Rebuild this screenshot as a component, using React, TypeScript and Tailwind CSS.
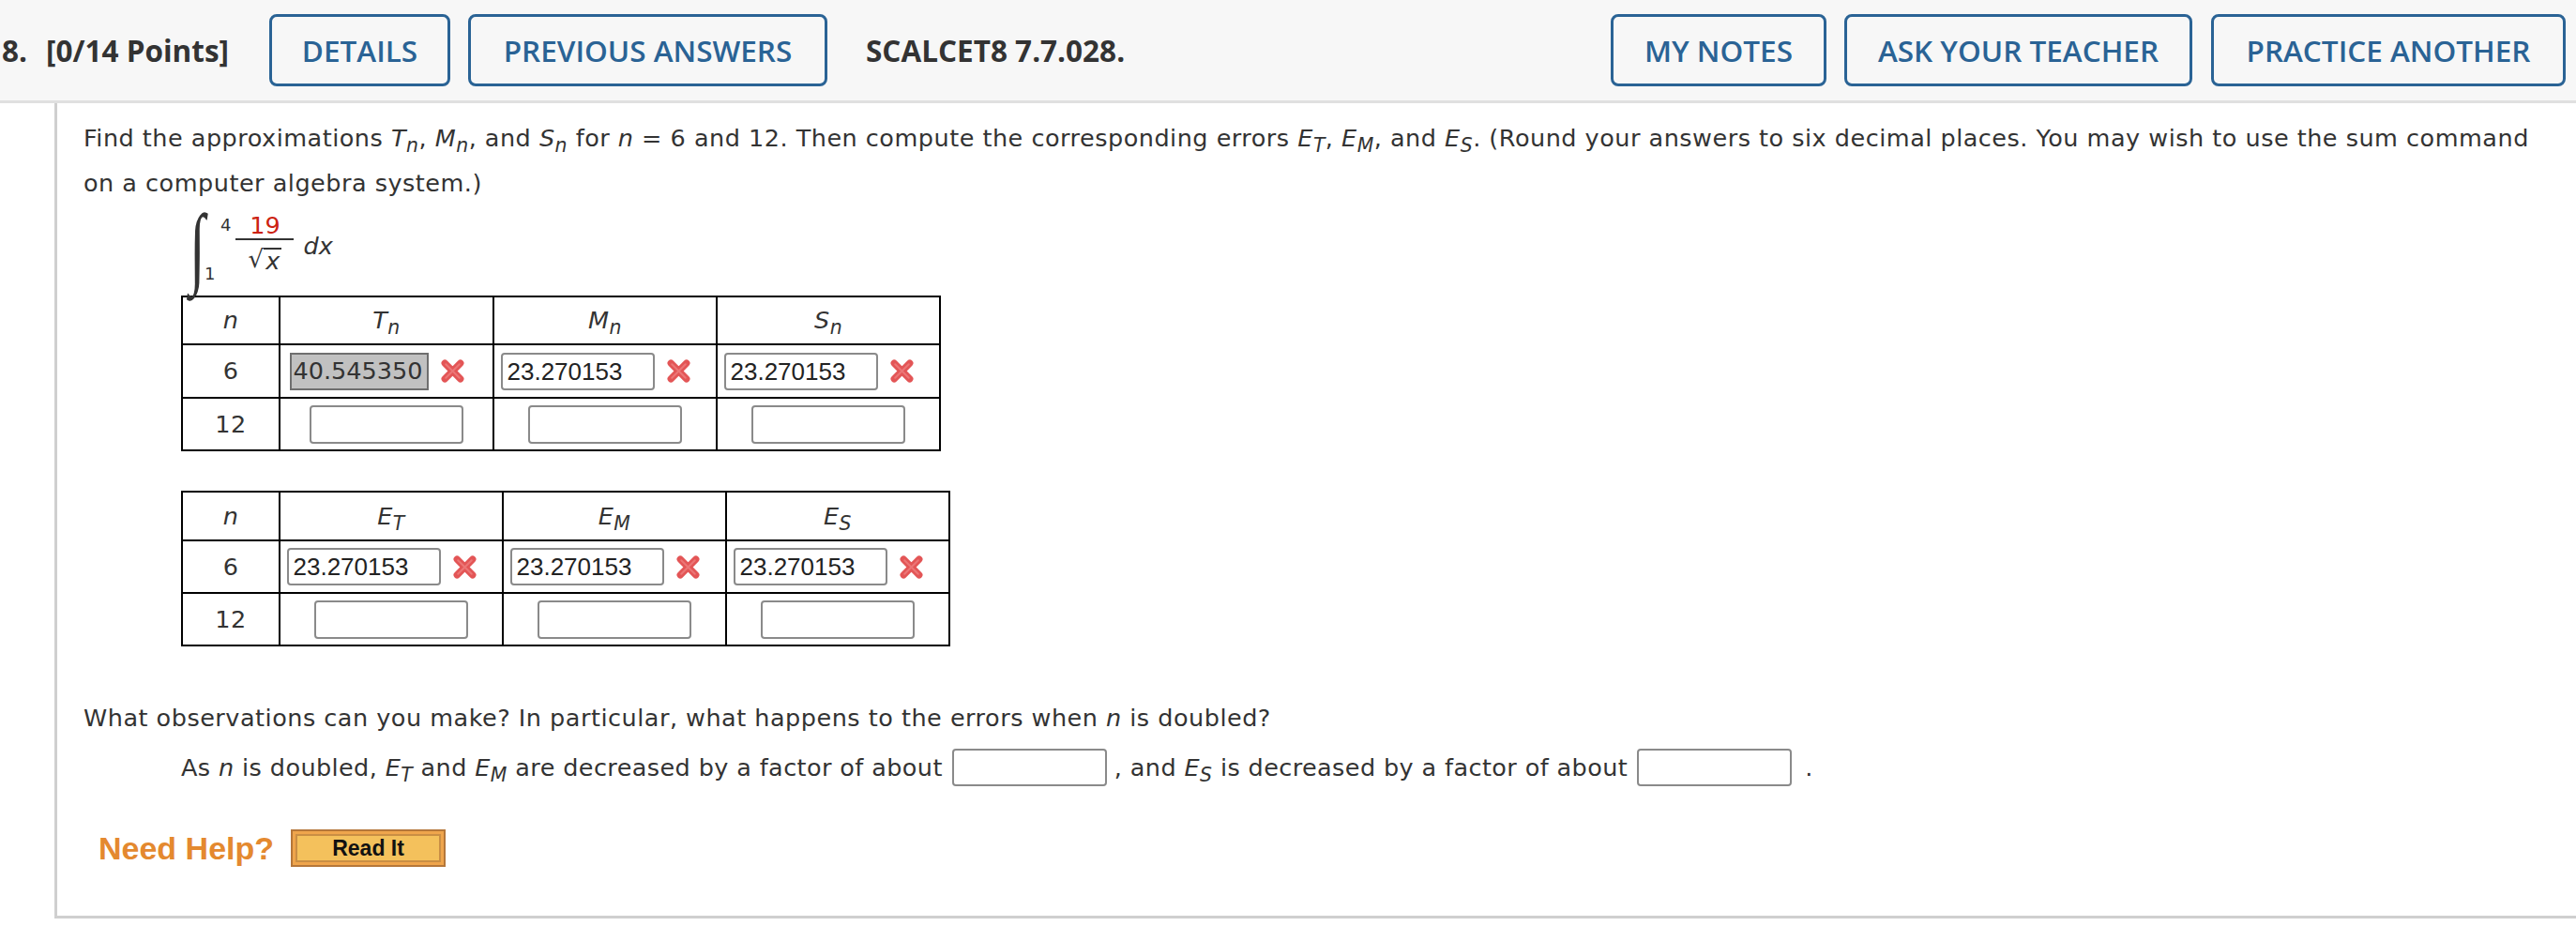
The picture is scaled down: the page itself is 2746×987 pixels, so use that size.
import React from "react";

const XMark = () => (
  <svg width="27" height="27" viewBox="0 0 26 26" className="shrink-0 block">
    <path d="M5 5 L21 21 M21 5 L5 21" stroke="#e35556" strokeWidth="7" strokeLinecap="round" />
    <path d="M6 6 L20 20 M20 6 L6 20" stroke="#f08584" strokeWidth="2" strokeLinecap="round" opacity="0.7" />
  </svg>
);

const S = ({ b, s }: { b: string; s: string }) => (
  <span className="italic">
    {b}
    <sub className="text-[0.8em] bottom-[-0.3em] italic">{s}</sub>
  </span>
);

const FilledInput = ({ v }: { v: string }) => (
  <div className="w-[164px] h-[40px] border-2 border-[#8a8a8a] rounded-[4px] bg-white flex items-center pl-[5px] font-['Liberation_Sans',sans-serif] text-[26px] text-[#222] leading-none tracking-normal">
    {v}
  </div>
);

const EmptyInput = () => (
  <div className="w-[164px] h-[41px] border-2 border-[#8a8a8a] rounded-[4px] bg-white mx-auto" />
);

const Cell6 = ({ children }: { children: React.ReactNode }) => (
  <div className="flex items-center justify-center">
    {children}
    <span className="ml-[12px] mr-[20px]">
      <XMark />
    </span>
  </div>
);

const td = "border-2 border-black text-center align-middle p-0";

const HeaderButton = ({ w, label }: { w: string; label: string }) => (
  <div
    className={`${w} h-[77px] border-[3.5px] border-[#2a6395] rounded-[8px] flex items-center justify-center text-[#2a6395] font-semibold text-[31.5px] leading-none whitespace-nowrap`}
  >
    {label}
  </div>
);

export default function App() {
  return (
    <div className="w-[2746px] h-[987px] bg-white overflow-hidden">
      {/* Header */}
      <div className="h-[110px] bg-[#f7f7f7] border-b-[3px] border-[#e0e0e0] flex items-center font-['Open_Sans',sans-serif] pr-[11px]">
        <span className="font-bold text-[31.5px] text-[#333] ml-[2px] leading-none">8.</span>
        <span className="font-bold text-[31.5px] text-[#333] ml-[20px] leading-none whitespace-nowrap">[0/14 Points]</span>
        <div className="ml-[43px]">
          <HeaderButton w="w-[193px]" label="DETAILS" />
        </div>
        <div className="ml-[19px]">
          <HeaderButton w="w-[383px]" label="PREVIOUS ANSWERS" />
        </div>
        <span className="ml-[41px] font-bold text-[31.5px] text-[#333] leading-none whitespace-nowrap">SCALCET8 7.7.028.</span>
        <div className="ml-auto">
          <HeaderButton w="w-[230px]" label="MY NOTES" />
        </div>
        <div className="ml-[19px]">
          <HeaderButton w="w-[371px]" label="ASK YOUR TEACHER" />
        </div>
        <div className="ml-[20px]">
          <HeaderButton w="w-[378px]" label="PRACTICE ANOTHER" />
        </div>
      </div>

      {/* Panel */}
      <div className="ml-[58px] border-l-[3px] border-b-[3px] border-[#cfcfcf] pl-[28px] pt-[13px] pb-[50px] font-['DejaVu_Sans',sans-serif] text-[25.5px] tracking-[0.5px] leading-[48px] text-[#333]">
        <div className="whitespace-nowrap">
          Find the approximations <S b="T" s="n" />, <S b="M" s="n" />, and <S b="S" s="n" /> for <i>n</i> = 6 and 12. Then
          compute the corresponding errors <S b="E" s="T" />, <S b="E" s="M" />, and <S b="E" s="S" />. (Round your answers to
          six decimal places. You may wish to use the sum command
        </div>
        <div className="whitespace-nowrap">on a computer algebra system.)</div>

        {/* Integral */}
        <div className="mt-[4px] h-[80px] flex items-stretch ml-[108px] leading-none tracking-normal">
          <div className="w-[27px] flex items-center justify-center">
            <span className="font-['Liberation_Serif',serif] italic text-[60px] scale-y-[1.6] inline-block text-[#333] leading-none">∫</span>
          </div>
          <div className="ml-[11px] flex flex-col justify-between text-[18px] pt-[8px] pb-[2px]">
            <span>4</span>
            <span className="-ml-[17px]">1</span>
          </div>
          <div className="ml-[5px] flex flex-col items-center w-[62px]">
            <span className="mt-[5px] text-[#cc2211] leading-[24px]">19</span>
            <div className="mt-[2px] h-[2px] w-[62px] bg-[#333]" />
            <span className="mt-[6px] leading-[28px] flex items-end">
              <span className="text-[26px]">√</span>
              <span className="italic border-t-2 border-[#333] leading-[24px] px-[2px]">x</span>
            </span>
          </div>
          <div className="ml-[10px] self-center italic">dx</div>
        </div>

        {/* Table 1 */}
        <table className="border-collapse ml-[104px] mt-[12px] leading-normal">
          <tbody>
            <tr className="h-[51px]">
              <td className={`${td} w-[104px] italic`}>n</td>
              <td className={`${td} w-[228px]`}><S b="T" s="n" /></td>
              <td className={`${td} w-[238px]`}><S b="M" s="n" /></td>
              <td className={`${td} w-[238px]`}><S b="S" s="n" /></td>
            </tr>
            <tr className="h-[57px]">
              <td className={td}>6</td>
              <td className={td}>
                <Cell6>
                  <div className="w-[148px] h-[40px] bg-[#c1c1c1] border-2 border-[#6f6f6f] flex items-center pl-[2px] text-[25.5px] tracking-normal text-[#333] leading-none">
                    40.545350
                  </div>
                </Cell6>
              </td>
              <td className={td}>
                <Cell6>
                  <FilledInput v="23.270153" />
                </Cell6>
              </td>
              <td className={td}>
                <Cell6>
                  <FilledInput v="23.270153" />
                </Cell6>
              </td>
            </tr>
            <tr className="h-[56px]">
              <td className={td}>12</td>
              <td className={td}><EmptyInput /></td>
              <td className={td}><EmptyInput /></td>
              <td className={td}><EmptyInput /></td>
            </tr>
          </tbody>
        </table>

        {/* Table 2 */}
        <table className="border-collapse ml-[104px] mt-[42px] leading-normal">
          <tbody>
            <tr className="h-[52px]">
              <td className={`${td} w-[104px] italic`}>n</td>
              <td className={`${td} w-[238px]`}><S b="E" s="T" /></td>
              <td className={`${td} w-[238px]`}><S b="E" s="M" /></td>
              <td className={`${td} w-[238px]`}><S b="E" s="S" /></td>
            </tr>
            <tr className="h-[56px]">
              <td className={td}>6</td>
              <td className={td}>
                <Cell6>
                  <FilledInput v="23.270153" />
                </Cell6>
              </td>
              <td className={td}>
                <Cell6>
                  <FilledInput v="23.270153" />
                </Cell6>
              </td>
              <td className={td}>
                <Cell6>
                  <FilledInput v="23.270153" />
                </Cell6>
              </td>
            </tr>
            <tr className="h-[56px]">
              <td className={td}>12</td>
              <td className={td}><EmptyInput /></td>
              <td className={td}><EmptyInput /></td>
              <td className={td}><EmptyInput /></td>
            </tr>
          </tbody>
        </table>

        <div className="mt-[52px] whitespace-nowrap">
          What observations can you make? In particular, what happens to the errors when <i>n</i> is doubled?
        </div>
        <div className="mt-[5px] h-[48px] flex items-center pl-[104px] whitespace-nowrap tracking-[0.4px]">
          <span>
            As <i>n</i> is doubled, <S b="E" s="T" /> and <S b="E" s="M" /> are decreased by a factor of about
          </span>
          <div className="ml-[10px] w-[165px] h-[40px] border-2 border-[#8a8a8a] rounded-[4px] bg-white" />
          <span className="ml-[8px]">
            , and <S b="E" s="S" /> is decreased by a factor of about
          </span>
          <div className="ml-[10px] w-[165px] h-[40px] border-2 border-[#8a8a8a] rounded-[4px] bg-white" />
          <span className="ml-[14px]">.</span>
        </div>

        <div className="mt-[40px] h-[44px] flex items-center pl-[16px] leading-none tracking-normal">
          <span className="font-['Liberation_Sans',sans-serif] font-bold text-[34px] text-[#e4892f]">Need Help?</span>
          <div className="ml-[18px] w-[165px] h-[40px] border-2 border-[#b5773a] bg-[#efa54c] p-[3px]">
            <div className="w-full h-full border-2 border-[#c98e44] bg-[#f4c15c] flex items-center justify-center font-['Liberation_Sans',sans-serif] font-bold text-[23px] text-[#111]">
              Read It
            </div>
          </div>
        </div>
      </div>
    </div>
  );
}
